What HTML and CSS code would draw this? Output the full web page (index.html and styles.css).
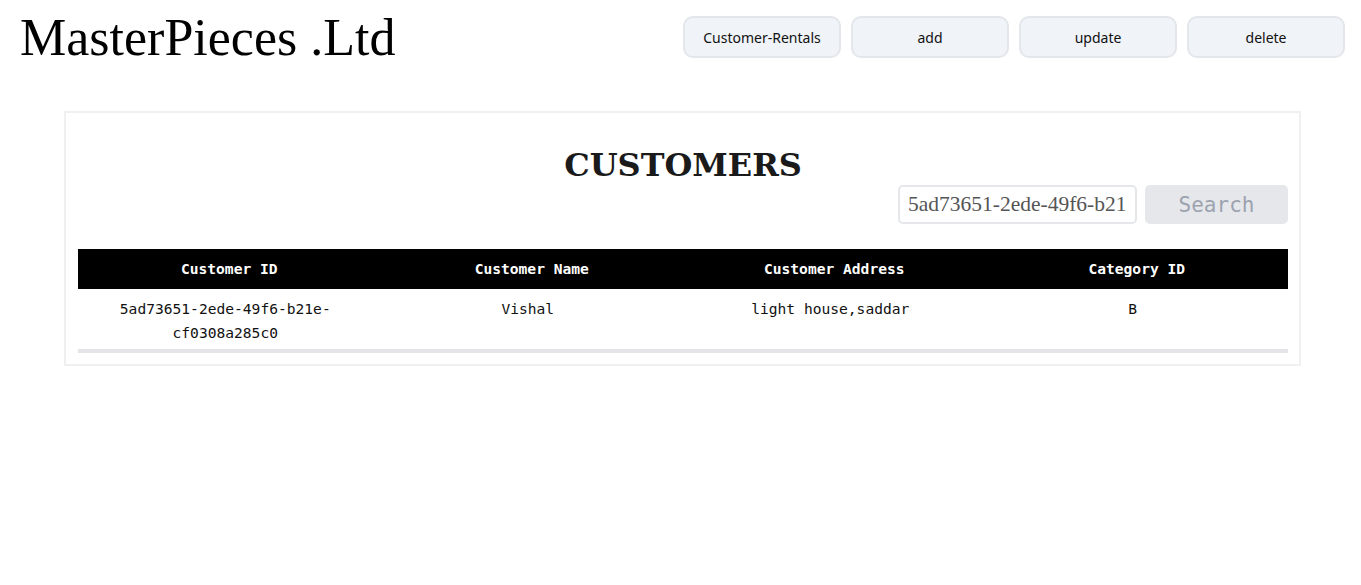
FILE: index.html
```html
<!DOCTYPE html>
<html>
<head>
<meta charset="utf-8">
<link rel="stylesheet" href="styles.css">
</head>
<body>
<header class="topbar">
  <h1 class="brand">MasterPieces .Ltd</h1>
  <nav class="actions">
    <button class="nav-btn">Customer-Rentals</button>
    <button class="nav-btn">add</button>
    <button class="nav-btn">update</button>
    <button class="nav-btn">delete</button>
  </nav>
</header>
<main class="card">
  <h2 class="card-title">CUSTOMERS</h2>
  <div class="search-row">
    <input class="search-input" type="text" value="5ad73651-2ede-49f6-b21e-cf0308a285c0">
    <button class="search-btn">Search</button>
  </div>
  <div class="table-wrap">
    <table class="data-table">
      <thead>
        <tr>
          <th>Customer ID</th>
          <th>Customer Name</th>
          <th>Customer Address</th>
          <th>Category ID</th>
        </tr>
      </thead>
      <tbody>
        <tr>
          <td>5ad73651-2ede-49f6-b21e-cf0308a285c0</td>
          <td>Vishal</td>
          <td>light house,saddar</td>
          <td>B</td>
        </tr>
      </tbody>
    </table>
  </div>
</main>
</body>
</html>
```
FILE: styles.css
```css
* { box-sizing: border-box; }
body {
  margin: 0;
  background: #fff;
  color: #111;
}
.topbar {
  display: flex;
  justify-content: space-between;
  align-items: center;
  padding: 13px 16px 0 20px;
}
.brand {
  margin: 0;
  font-family: "Liberation Serif", serif;
  font-weight: 400;
  font-size: 52px;
  line-height: 46px;
  padding-top: 2px;
  color: #000;
}
.actions {
  display: flex;
  gap: 10px;
}
.nav-btn {
  width: 158px;
  height: 42px;
  background: #f0f3f8;
  border: 2px solid #e3e6eb;
  border-radius: 10px;
  font-family: "Noto Sans", sans-serif;
  font-size: 14px;
  color: #111;
}
.card {
  margin: 50px 60px 0 64px;
  border: 2px solid #f0f0f0;
  padding: 34px 11px 11px 12px;
}
.card-title {
  margin: 0;
  text-align: center;
  font-family: "DejaVu Serif", serif;
  font-weight: 700;
  font-size: 32px;
  line-height: 36px;
  color: #1a1a1a;
}
.search-row {
  display: flex;
  justify-content: flex-end;
  gap: 8px;
  margin-top: 2px;
}
.search-input {
  width: 239px;
  height: 39px;
  border: 2px solid #e5e7eb;
  border-radius: 5px;
  padding: 0 8px;
  font-family: "Liberation Serif", serif;
  font-size: 21.5px;
  color: #555;
}
.search-btn {
  width: 143px;
  height: 39px;
  border: none;
  border-radius: 5px;
  background: #e5e7eb;
  color: #9ca3af;
  font-family: "DejaVu Sans Mono", monospace;
  font-size: 21px;
}
.table-wrap {
  margin-top: 25px;
  border-bottom: 4px solid #e5e5e9;
}
.data-table {
  width: 100%;
  border-collapse: collapse;
  table-layout: fixed;
  font-family: "DejaVu Sans Mono", monospace;
  font-size: 14.6px;
  line-height: 24px;
}
.data-table th {
  background: #000;
  color: #fff;
  font-weight: 700;
  padding: 8px 10px;
}
.data-table td {
  text-align: center;
  vertical-align: top;
  padding: 8px 14px 4px 6px;
  color: #111;
}
```
